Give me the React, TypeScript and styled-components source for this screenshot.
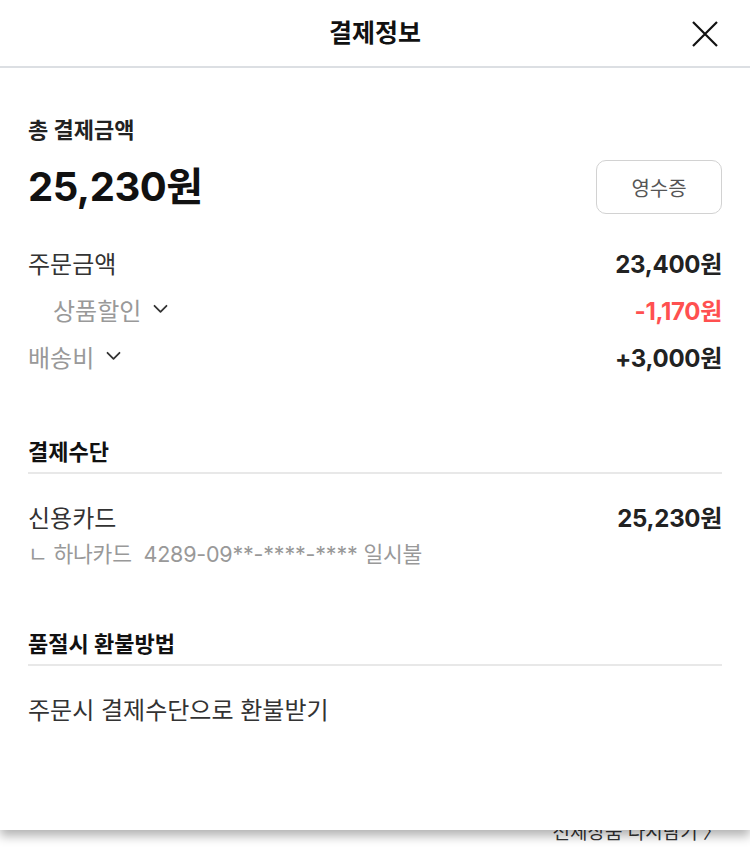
import styled, { createGlobalStyle } from "styled-components";

const FONT = `Inter, "Noto Sans CJK KR", sans-serif`;

const GlobalStyle = createGlobalStyle`
  * {
    box-sizing: border-box;
  }

  body {
    margin: 0;
    background: #ffffff;
    font-family: ${FONT};
    color: #222222;
  }
`;

interface PriceRow {
  label: string;
  value: string;
  sub?: boolean;
  muted?: boolean;
  toggle?: boolean;
  accent?: boolean;
}

const PRICE_ROWS: PriceRow[] = [
  { label: "주문금액", value: "23,400원" },
  { label: "상품할인", value: "-1,170원", sub: true, muted: true, toggle: true, accent: true },
  { label: "배송비", value: "+3,000원", muted: true, toggle: true },
];

function Chevron() {
  return (
    <svg width="15" height="10" viewBox="0 0 15 10" fill="none">
      <path d="M1.5 1.8L7.5 7.8l6-6" stroke="#333" strokeWidth="1.8" strokeLinecap="round" strokeLinejoin="round" />
    </svg>
  );
}

function CloseIcon() {
  return (
    <svg width="28" height="28" viewBox="0 0 28 28" fill="none">
      <path d="M2 2l24 24M26 2L2 26" stroke="#111" strokeWidth="2.2" />
    </svg>
  );
}

export default function App() {
  return (
    <>
      <GlobalStyle />
      <Page>
        <BehindLink>전체상품 다시담기 〉</BehindLink>
        <Sheet>
          <Header>
            <Title>결제정보</Title>
            <CloseButton aria-label="닫기">
              <CloseIcon />
            </CloseButton>
          </Header>

          <Body>
            <TotalSection>
              <TotalLabel>총 결제금액</TotalLabel>
              <TotalRow>
                <TotalAmount>25,230원</TotalAmount>
                <ReceiptButton>영수증</ReceiptButton>
              </TotalRow>
            </TotalSection>

            <Rows>
              {PRICE_ROWS.map((row) => (
                <Row key={row.label}>
                  <RowLabel $sub={row.sub} $muted={row.muted}>
                    {row.label}
                    {row.toggle && <Chevron />}
                  </RowLabel>
                  <RowValue $accent={row.accent}>{row.value}</RowValue>
                </Row>
              ))}
            </Rows>

            <Section>
              <SectionTitle>결제수단</SectionTitle>
              <SectionBody>
                <Row>
                  <RowLabel>신용카드</RowLabel>
                  <RowValue>25,230원</RowValue>
                </Row>
                <CardDetail>ㄴ 하나카드&nbsp;&nbsp;4289-09**-****-**** 일시불</CardDetail>
              </SectionBody>
            </Section>

            <Section>
              <SectionTitle>품절시 환불방법</SectionTitle>
              <SectionBody>
                <PlainText>주문시 결제수단으로 환불받기</PlainText>
              </SectionBody>
            </Section>
          </Body>
        </Sheet>
      </Page>
    </>
  );
}

const Page = styled.div`
  position: relative;
  height: 852px;
  overflow: hidden;
  background: #ffffff;
  display: flex;
  flex-direction: column;
  align-items: flex-end;
  padding: 820px 28px 0 0;
`;

const BehindLink = styled.div`
  font-size: 19px;
  line-height: 26px;
  color: #333;
`;

const Sheet = styled.div`
  position: absolute;
  top: 0;
  left: 0;
  right: 0;
  height: 830px;
  background: #ffffff;
  box-shadow: 0 6px 10px rgba(0, 0, 0, 0.3);
  display: flex;
  flex-direction: column;
`;

const Header = styled.header`
  position: relative;
  height: 68px;
  flex-shrink: 0;
  display: flex;
  align-items: center;
  justify-content: center;
  border-bottom: 2px solid #dcdfe3;
`;

const Title = styled.h1`
  margin: 0;
  font-size: 25px;
  font-weight: 700;
  line-height: 30px;
  color: #111;
`;

const CloseButton = styled.button`
  position: absolute;
  right: 30px;
  top: 19px;
  width: 30px;
  height: 30px;
  padding: 1px;
  border: none;
  background: none;
  display: flex;
  align-items: center;
  justify-content: center;
`;

const Body = styled.div`
  padding: 47px 28px 0;
  display: flex;
  flex-direction: column;
`;

const TotalSection = styled.div`
  display: flex;
  flex-direction: column;
  gap: 15px;
`;

const TotalLabel = styled.div`
  font-size: 22px;
  font-weight: 700;
  line-height: 30px;
  color: #222;
`;

const TotalRow = styled.div`
  display: flex;
  align-items: center;
  justify-content: space-between;
`;

const TotalAmount = styled.div`
  font-size: 40px;
  font-weight: 700;
  line-height: 48px;
  color: #111;
  letter-spacing: -0.5px;
`;

const ReceiptButton = styled.button`
  width: 126px;
  height: 54px;
  border: 1.5px solid #d2d2d2;
  border-radius: 10px;
  background: #fff;
  font-family: ${FONT};
  font-size: 20px;
  color: #555;
`;

const Rows = styled.div`
  margin-top: 33px;
  display: flex;
  flex-direction: column;
  gap: 17px;
`;

const Row = styled.div`
  display: flex;
  align-items: center;
  justify-content: space-between;
  height: 30px;
`;

const RowLabel = styled.div<{ $sub?: boolean; $muted?: boolean }>`
  display: flex;
  align-items: center;
  gap: 12px;
  padding-left: ${(p) => (p.$sub ? "25px" : "0")};
  font-size: 24px;
  color: ${(p) => (p.$muted ? "#999" : "#333")};
`;

const RowValue = styled.div<{ $accent?: boolean }>`
  font-size: 24px;
  font-weight: 700;
  color: ${(p) => (p.$accent ? "#ff5050" : "#222")};
  letter-spacing: -0.3px;
`;

const Section = styled.section`
  margin-top: 66px;
  display: flex;
  flex-direction: column;

  & + & {
    margin-top: 62px;
  }
`;

const SectionTitle = styled.h2`
  margin: 0;
  padding-bottom: 5px;
  border-bottom: 2px solid #e8e8e8;
  font-size: 22px;
  font-weight: 700;
  line-height: 30px;
  color: #111;
`;

const SectionBody = styled.div`
  padding-top: 27px;
  display: flex;
  flex-direction: column;
  gap: 10px;
`;

const CardDetail = styled.div`
  font-size: 21.5px;
  line-height: 26px;
  color: #999;
  letter-spacing: -0.2px;
`;

const PlainText = styled.div`
  padding-top: 3px;
  font-size: 24px;
  line-height: 30px;
  color: #333;
`;
